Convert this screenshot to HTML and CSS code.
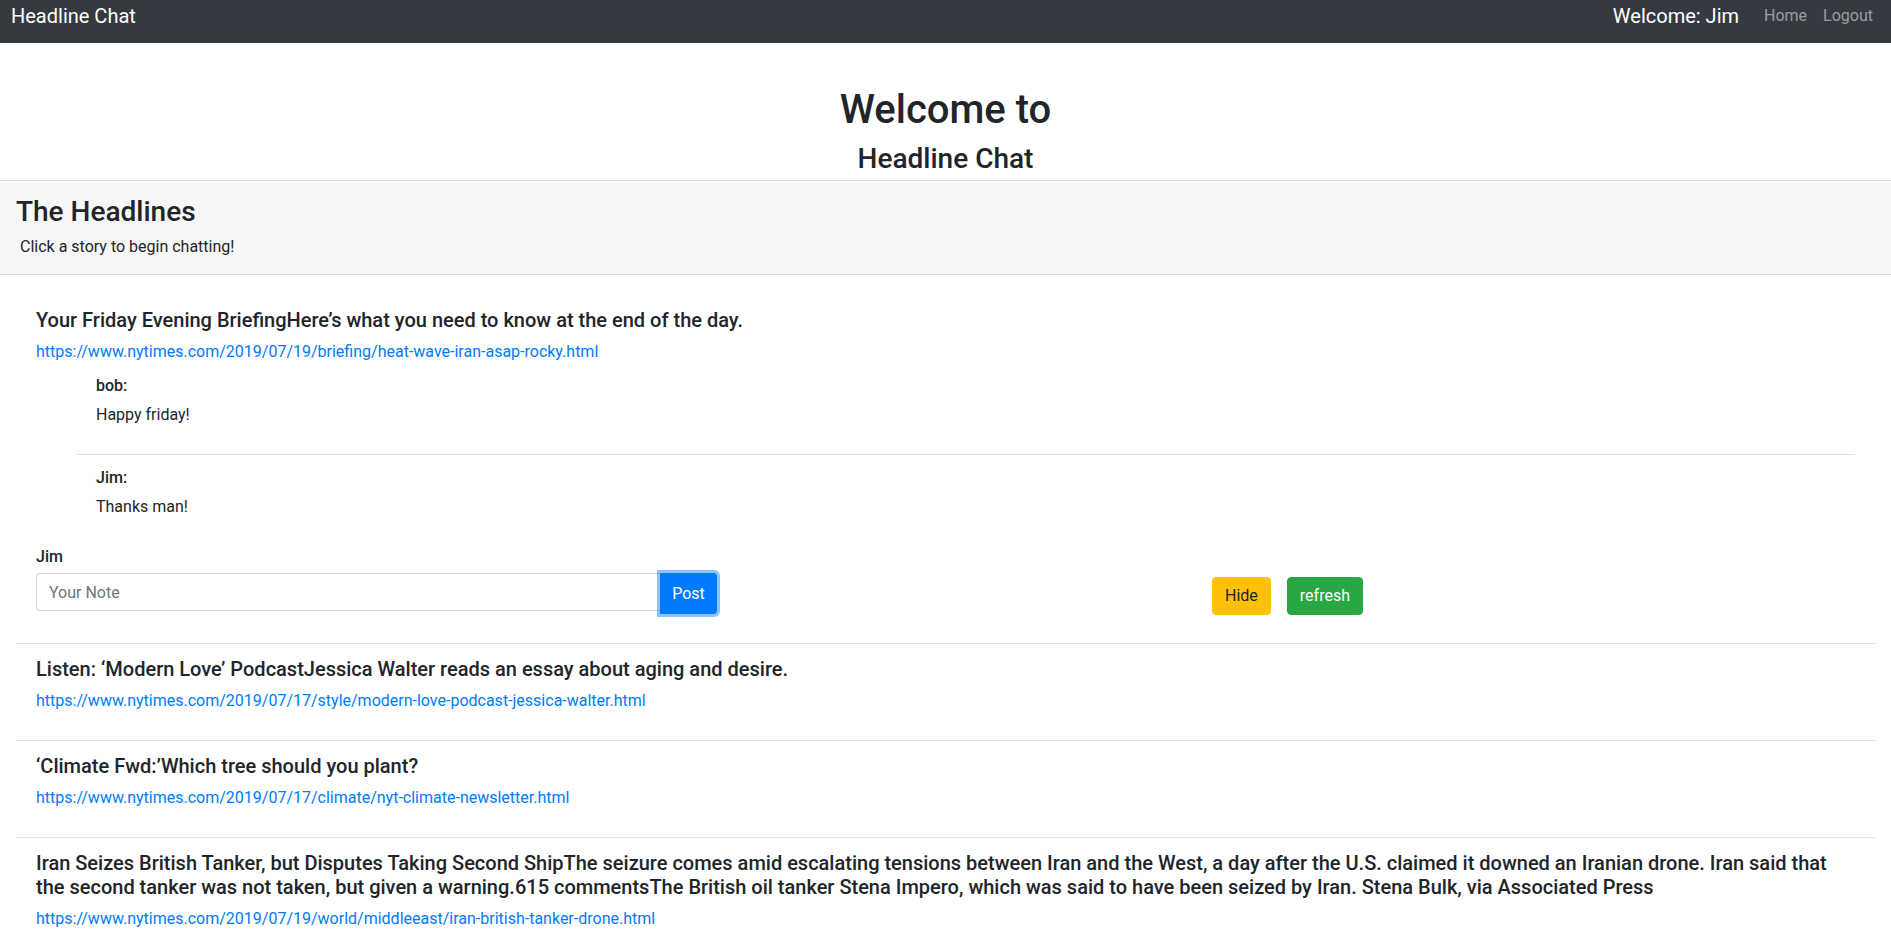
FILE: index.html
```html
<!DOCTYPE html>
<html lang="en">
<head>
<meta charset="utf-8">
<title>Headline Chat</title>
<link rel="stylesheet" href="styles.css">
</head>
<body>
<nav class="navbar">
  <a class="brand" href="#">Headline Chat</a>
  <div class="nav-right">
    <span class="welcome-user">Welcome: Jim</span>
    <a class="nav-link" href="#">Home</a>
    <a class="nav-link" href="#">Logout</a>
  </div>
</nav>

<header class="hero">
  <h1 class="hero-title">Welcome to</h1>
  <h3 class="hero-sub">Headline Chat</h3>
</header>

<section class="headlines-bar">
  <h3 class="bar-title">The Headlines</h3>
  <p class="bar-text">Click a story to begin chatting!</p>
</section>

<main class="container">
  <ul class="stories">
    <li class="story">
      <h5 class="story-title">Your Friday Evening BriefingHere’s what you need to know at the end of the day.</h5>
      <p class="story-link"><a href="#">https://www.nytimes.com/2019/07/19/briefing/heat-wave-iran-asap-rocky.html</a></p>
      <div class="chat">
        <div class="msg">
          <div class="msg-name">bob:</div>
          <p class="msg-text">Happy friday!</p>
        </div>
        <div class="msg">
          <div class="msg-name">Jim:</div>
          <p class="msg-text">Thanks man!</p>
        </div>
      </div>
      <div class="compose">
        <form class="note-form">
          <label class="note-label" for="note1">Jim</label>
          <div class="input-group">
            <input id="note1" class="note-input" type="text" placeholder="Your Note">
            <button type="button" class="btn btn-post">Post</button>
          </div>
        </form>
        <div class="actions">
          <button type="button" class="btn btn-hide">Hide</button>
          <button type="button" class="btn btn-refresh">refresh</button>
        </div>
      </div>
    </li>
    <li class="story">
      <h5 class="story-title">Listen: ‘Modern Love’ PodcastJessica Walter reads an essay about aging and desire.</h5>
      <p class="story-link"><a href="#">https://www.nytimes.com/2019/07/17/style/modern-love-podcast-jessica-walter.html</a></p>
    </li>
    <li class="story">
      <h5 class="story-title">‘Climate Fwd:’Which tree should you plant?</h5>
      <p class="story-link"><a href="#">https://www.nytimes.com/2019/07/17/climate/nyt-climate-newsletter.html</a></p>
    </li>
    <li class="story">
      <h5 class="story-title">Iran Seizes British Tanker, but Disputes Taking Second ShipThe seizure comes amid escalating tensions between Iran and the West, a day after the U.S. claimed it downed an Iranian drone. Iran said that the second tanker was not taken, but given a warning.615 commentsThe British oil tanker Stena Impero, which was said to have been seized by Iran. Stena Bulk, via Associated Press</h5>
      <p class="story-link"><a href="#">https://www.nytimes.com/2019/07/19/world/middleeast/iran-british-tanker-drone.html</a></p>
    </li>
  </ul>
</main>
</body>
</html>
```

FILE: styles.css
```css
* {
  box-sizing: border-box;
}

body {
  margin: 0;
  font-family: Roboto, "Liberation Sans", Arial, sans-serif;
  font-size: 16px;
  line-height: 1.5;
  color: #212529;
  background: #fff;
}

a {
  color: #007bff;
  text-decoration: none;
}

/* Navbar */
.navbar {
  height: 43px;
  background: #343a40;
  display: flex;
  align-items: flex-start;
  justify-content: space-between;
  padding: 1px 10px 0 11px;
}

.brand {
  color: #fff;
  font-size: 20px;
  line-height: 30px;
}

.nav-right {
  display: flex;
  align-items: flex-start;
}

.welcome-user {
  color: #fff;
  font-size: 20px;
  line-height: 30px;
  margin-right: 17px;
}

.nav-link {
  color: rgba(255, 255, 255, 0.5);
  font-size: 16px;
  line-height: 30px;
  padding: 0 8px;
}

/* Hero */
.hero {
  text-align: center;
  padding: 43px 0 4px;
}

.hero-title {
  margin: 0 0 8px;
  font-size: 40px;
  font-weight: 500;
  line-height: 1.2;
}

.hero-sub {
  margin: 0;
  font-size: 28px;
  font-weight: 500;
  line-height: 1.2;
}

/* Headlines bar */
.headlines-bar {
  background: #f7f7f7;
  border-top: 1px solid #dcdcdc;
  border-bottom: 1px solid #dcdcdc;
  padding: 14px 16px 15px;
}

.bar-title {
  margin: 0 0 7px;
  font-size: 28px;
  font-weight: 500;
  line-height: 1.2;
}

.bar-text {
  margin: 0;
  padding-left: 4px;
}

/* Stories */
.container {
  padding: 0 16px;
}

.stories {
  list-style: none;
  margin: 20px 0 0;
  padding: 0;
}

.story {
  padding: 13px 20px 11px;
}

.story + .story {
  border-top: 1px solid #dee2e6;
}

.story-title {
  margin: 0 0 8px;
  font-size: 20px;
  font-weight: 500;
  line-height: 1.2;
}

.story-link {
  margin: 0 0 16px;
}

/* Chat */
.chat {
  margin: -6px 0 0 40px;
}

.msg {
  padding: 0 20px 27px;
}

.msg + .msg {
  border-top: 1px solid #dee2e6;
  padding-top: 11px;
  padding-bottom: 0;
}

.msg-name {
  font-weight: 500;
}

.msg-text {
  margin: 5px 0 0;
}

/* Compose */
.compose {
  display: flex;
  align-items: flex-end;
  margin: 26px 0 18px;
}

.note-form {
  width: 681px;
  margin: 0;
}

.note-label {
  display: block;
  font-weight: 500;
  margin-bottom: 4px;
}

.input-group {
  display: flex;
  align-items: flex-start;
}

.note-input {
  width: 624px;
  height: 38px;
  padding: 6px 12px;
  font-family: inherit;
  font-size: 16px;
  color: #495057;
  border: 1px solid #ced4da;
  border-right: none;
  border-radius: 4px 0 0 4px;
  outline: none;
}

.note-input::placeholder {
  color: #6c757d;
}

.btn {
  font-family: inherit;
  font-size: 16px;
  line-height: 24px;
  padding: 6px 12px;
  border: 1px solid transparent;
  border-radius: 4px;
  cursor: pointer;
}

.btn-post {
  width: 57px;
  height: 41px;
  padding: 0;
  color: #fff;
  background: #007bff;
  border-color: #007bff;
  border-radius: 0 3px 3px 0;
  box-shadow: 0 0 0 3px rgba(0, 123, 255, 0.45);
}

.actions {
  display: flex;
  gap: 16px;
  margin-left: 495px;
  margin-bottom: -1px;
}

.btn-hide {
  color: #212529;
  background: #ffc107;
  border-color: #ffc107;
}

.btn-refresh {
  color: #fff;
  background: #28a745;
  border-color: #28a745;
}
```
